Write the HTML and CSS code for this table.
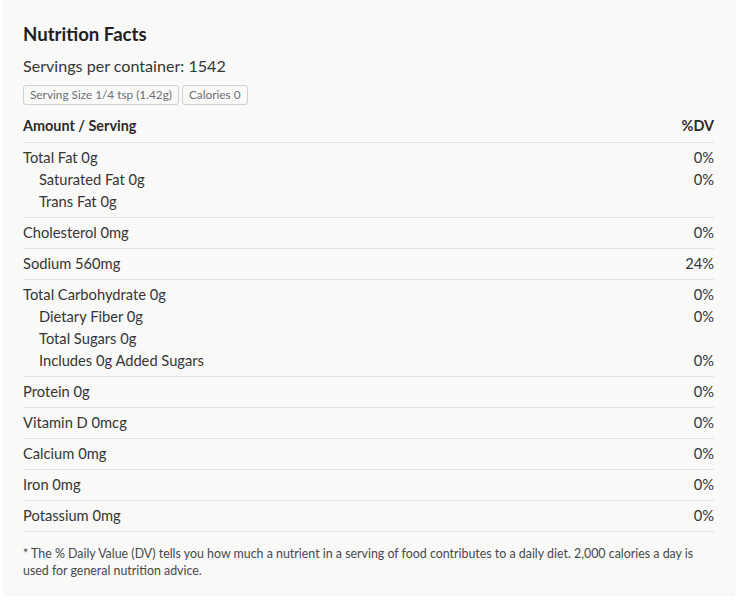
FILE: index.html
```html
<!DOCTYPE html>
<html>
<head>
<meta charset="utf-8">
<link rel="stylesheet" href="styles.css">
</head>
<body>
<div class="card">
  <h2 class="title">Nutrition Facts</h2>
  <div class="servings">Servings per container: 1542</div>
  <div class="badges">
    <span class="badge">Serving Size 1/4 tsp (1.42g)</span>
    <span class="badge">Calories 0</span>
  </div>
  <div class="head-row">
    <span>Amount / Serving</span>
    <span>%DV</span>
  </div>
  <div class="group">
    <div class="row"><span>Total Fat 0g</span><span>0%</span></div>
    <div class="row sub"><span>Saturated Fat 0g</span><span>0%</span></div>
    <div class="row sub"><span>Trans Fat 0g</span><span></span></div>
  </div>
  <div class="group">
    <div class="row"><span>Cholesterol 0mg</span><span>0%</span></div>
  </div>
  <div class="group">
    <div class="row"><span>Sodium 560mg</span><span>24%</span></div>
  </div>
  <div class="group">
    <div class="row"><span>Total Carbohydrate 0g</span><span>0%</span></div>
    <div class="row sub"><span>Dietary Fiber 0g</span><span>0%</span></div>
    <div class="row sub"><span>Total Sugars 0g</span><span></span></div>
    <div class="row sub"><span>Includes 0g Added Sugars</span><span>0%</span></div>
  </div>
  <div class="group">
    <div class="row"><span>Protein 0g</span><span>0%</span></div>
  </div>
  <div class="group">
    <div class="row"><span>Vitamin D 0mcg</span><span>0%</span></div>
  </div>
  <div class="group">
    <div class="row"><span>Calcium 0mg</span><span>0%</span></div>
  </div>
  <div class="group">
    <div class="row"><span>Iron 0mg</span><span>0%</span></div>
  </div>
  <div class="group">
    <div class="row"><span>Potassium 0mg</span><span>0%</span></div>
  </div>
  <p class="note">* The % Daily Value (DV) tells you how much a nutrient in a serving of food contributes to a daily diet. 2,000 calories a day is used for general nutrition advice.</p>
</div>
</body>
</html>
```
FILE: styles.css
```css
html, body {
  margin: 0;
  padding: 0;
  background: #ffffff;
}
body {
  font-family: Lato, "Noto Sans", sans-serif;
  color: #343538;
}
.card {
  margin: 0 5px 0 3px;
  padding: 22px 20px 17px 20px;
  background: #f9f9f7;
  border-radius: 0 0 6px 6px;
  box-shadow: 1px 1px 1px rgba(0,0,0,0.06);
  height: 557px;
}
.title {
  margin: 0;
  font-size: 18.6px;
  line-height: 24px;
  font-weight: 700;
  color: #1f1f22;
}
.servings {
  margin-top: 9px;
  font-size: 16.1px;
  line-height: 22px;
}
.badges {
  display: flex;
  gap: 3px;
  margin-top: 8px;
}
.badge {
  font-size: 11.8px;
  line-height: 18px;
  padding: 0 6px;
  border: 1px solid #cfd0d3;
  border-radius: 3px;
  color: #6c6f75;
  background: #f9f9f7;
}
.head-row {
  display: flex;
  justify-content: space-between;
  margin-top: 11px;
  padding-bottom: 6px;
  font-size: 14.4px;
  line-height: 20px;
  font-weight: 700;
  color: #2b2c2f;
  border-bottom: 1px solid #e2e2e0;
}
.group {
  padding: 3px 0 5px 0;
  border-bottom: 1px solid #e2e2e0;
}
.row {
  display: flex;
  justify-content: space-between;
  font-size: 14.7px;
  line-height: 22px;
}
.row.sub {
  padding-left: 16px;
}
.note {
  margin: 13px 0 0 0;
  font-size: 12.4px;
  line-height: 17px;
  color: #46484c;
}
```
